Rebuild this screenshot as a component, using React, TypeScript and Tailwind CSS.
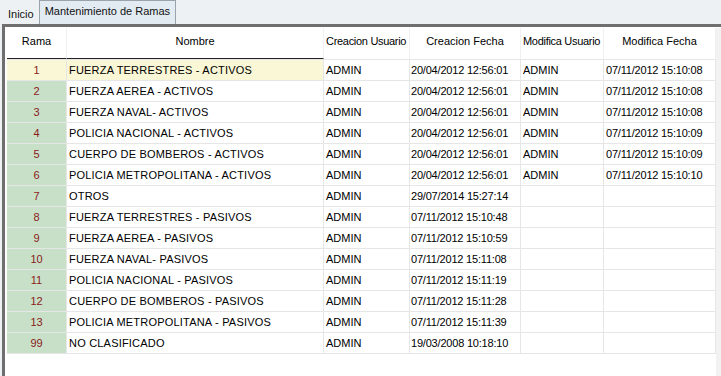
import React from 'react';

type Row = { rama: string; nombre: string; cu: string; cf: string; mu: string; mf: string };

const rows: Row[] = [
  { rama: '1', nombre: 'FUERZA TERRESTRES - ACTIVOS', cu: 'ADMIN', cf: '20/04/2012 12:56:01', mu: 'ADMIN', mf: '07/11/2012 15:10:08' },
  { rama: '2', nombre: 'FUERZA AEREA - ACTIVOS', cu: 'ADMIN', cf: '20/04/2012 12:56:01', mu: 'ADMIN', mf: '07/11/2012 15:10:08' },
  { rama: '3', nombre: 'FUERZA NAVAL- ACTIVOS', cu: 'ADMIN', cf: '20/04/2012 12:56:01', mu: 'ADMIN', mf: '07/11/2012 15:10:08' },
  { rama: '4', nombre: 'POLICIA NACIONAL  - ACTIVOS', cu: 'ADMIN', cf: '20/04/2012 12:56:01', mu: 'ADMIN', mf: '07/11/2012 15:10:09' },
  { rama: '5', nombre: 'CUERPO DE BOMBEROS - ACTIVOS', cu: 'ADMIN', cf: '20/04/2012 12:56:01', mu: 'ADMIN', mf: '07/11/2012 15:10:09' },
  { rama: '6', nombre: 'POLICIA METROPOLITANA - ACTIVOS', cu: 'ADMIN', cf: '20/04/2012 12:56:01', mu: 'ADMIN', mf: '07/11/2012 15:10:10' },
  { rama: '7', nombre: 'OTROS', cu: 'ADMIN', cf: '29/07/2014 15:27:14', mu: '', mf: '' },
  { rama: '8', nombre: 'FUERZA TERRESTRES - PASIVOS', cu: 'ADMIN', cf: '07/11/2012 15:10:48', mu: '', mf: '' },
  { rama: '9', nombre: 'FUERZA AEREA - PASIVOS', cu: 'ADMIN', cf: '07/11/2012 15:10:59', mu: '', mf: '' },
  { rama: '10', nombre: 'FUERZA NAVAL- PASIVOS', cu: 'ADMIN', cf: '07/11/2012 15:11:08', mu: '', mf: '' },
  { rama: '11', nombre: 'POLICIA NACIONAL  - PASIVOS', cu: 'ADMIN', cf: '07/11/2012 15:11:19', mu: '', mf: '' },
  { rama: '12', nombre: 'CUERPO DE BOMBEROS - PASIVOS', cu: 'ADMIN', cf: '07/11/2012 15:11:28', mu: '', mf: '' },
  { rama: '13', nombre: 'POLICIA METROPOLITANA - PASIVOS', cu: 'ADMIN', cf: '07/11/2012 15:11:39', mu: '', mf: '' },
  { rama: '99', nombre: 'NO CLASIFICADO', cu: 'ADMIN', cf: '19/03/2008 10:18:10', mu: '', mf: '' },
];

const cols = 'grid grid-cols-[60px_257px_86px_111px_83px_112px]';

export default function App() {
  return (
    <div className="w-[721px] h-[376px] overflow-hidden bg-[#eef1f4] text-[11px] text-black flex flex-col" style={{ fontFamily: '"Liberation Sans", Arial, sans-serif' }}>
      {/* tabs */}
      <div className="h-[24px] flex items-end pl-[5px] gap-[2px] bg-[#eef1f4]">
        <div className="h-[20px] px-[3px] flex items-center pt-[1px] text-[#111]">Inicio</div>
        <div className="h-[24px] px-[5px] flex items-center pb-[2px] border border-b-0 border-[#9aa3ab] bg-[#e3ebf2] text-[#111]">
          Mantenimiento de Ramas
        </div>
      </div>

      {/* panel */}
      <div className="flex-1 flex flex-col border-t-[3px] border-l-[3px] border-[#6f6f6f] ml-[2px] bg-white">
        <div className="flex-1 flex pl-[2px] pt-[1px]">
          <div className="flex flex-col">
            {/* header */}
            <div className={`${cols} h-[32px] border-b border-[#e6e6e6]`}>
              <div className="text-center pt-[5px] border-r border-[#f0f0f0] border-b border-b-[#222]">Rama</div>
              <div className="text-center pt-[5px] border-r border-[#f0f0f0] border-b border-b-[#222]">Nombre</div>
              <div className="pl-[2px] pt-[5px] border-r border-[#f0f0f0] whitespace-nowrap overflow-hidden tracking-[-0.3px]">Creacion Usuario</div>
              <div className="text-center pt-[5px] border-r border-[#f0f0f0]">Creacion Fecha</div>
              <div className="pl-[2px] pt-[5px] border-r border-[#f0f0f0] whitespace-nowrap overflow-hidden tracking-[-0.3px]">Modifica Usuario</div>
              <div className="text-center pt-[5px] border-r border-[#f0f0f0]">Modifica Fecha</div>
            </div>
            {/* rows */}
            {rows.map((r, i) => (
              <div key={r.rama} className={`${cols} h-[21px] border-b border-[#e6e6e6] leading-[20px]`}>
                <div className={`text-center text-[#8b1a1a] border-r border-[#e6e6e6] ${i === 0 ? 'bg-[#faf7d6]' : 'bg-[#c8e0c8]'}`}>{r.rama}</div>
                <div className={`pl-[2px] border-r border-[#e6e6e6] whitespace-nowrap tracking-[0.2px] ${i === 0 ? 'bg-[#faf7d6]' : ''}`}>{r.nombre}</div>
                <div className="pl-[2px] border-r border-[#e6e6e6]">{r.cu}</div>
                <div className="pl-[1px] border-r border-[#e6e6e6] tracking-[-0.2px]">{r.cf}</div>
                <div className="pl-[2px] border-r border-[#e6e6e6]">{r.mu}</div>
                <div className="pl-[2px] border-r border-[#e6e6e6] tracking-[-0.2px]">{r.mf}</div>
              </div>
            ))}
          </div>
          <div className="flex-1 bg-[#f2f2f2]" />
        </div>
      </div>
    </div>
  );
}
